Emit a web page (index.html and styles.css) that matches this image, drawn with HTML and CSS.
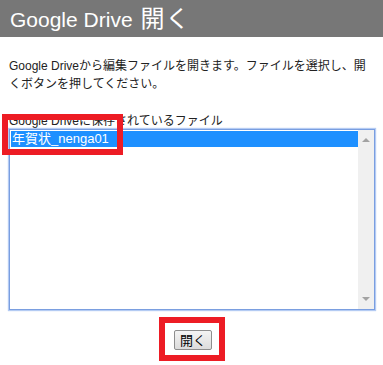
FILE: index.html
```html
<!DOCTYPE html>
<html lang="ja">
<head>
  <meta charset="UTF-8" />
  <meta name="viewport" content="width=device-width, initial-scale=1.0"/>
  <title>Google Drive 開く</title>
  <link rel="stylesheet" href="styles.css">
</head>
<body>
  <div class="header">Google Drive <span class="header-jp">開く</span></div>

  <div class="content">
    <p class="desc">Google Driveから編集ファイルを開きます。ファイルを選択し、開くボタンを押してください。</p>

    <div class="list-section">
      <div class="list-label">Google Driveに保存されているファイル</div>
      <div class="file-list">
        <div class="rows">
          <div class="row selected">年賀状_nenga01</div>
        </div>
        <div class="scrollbar">
          <span class="arrow up"></span>
          <span class="arrow down"></span>
        </div>
      </div>
      <div class="mark mark-file"></div>
    </div>

    <div class="actions">
      <div class="mark-button">
        <button class="open-btn">開く</button>
      </div>
    </div>
  </div>
</body>
</html>
```

FILE: styles.css
```css
body {
  margin: 0;
  padding: 0;
  background: #fff;
  color: #222;
  font-family: "Liberation Sans", "Noto Sans CJK JP", sans-serif;
}

.header {
  height: 37px;
  line-height: 37px;
  padding-left: 10px;
  background: #777;
  color: #fff;
  font-size: 21px;
  overflow: hidden;
}

.header-jp {
  font-size: 24px;
  margin-left: 2px;
  letter-spacing: 1px;
}

.content {
  padding: 0 8px 0 9px;
}

.desc {
  margin: 20px 0 0;
  font-size: 12px;
  line-height: 18px;
}

.list-section {
  position: relative;
  margin-top: 20px;
}

.list-label {
  font-size: 12px;
  line-height: 16px;
}

.file-list {
  display: flex;
  height: 181px;
  box-sizing: border-box;
  border: 1px solid #7a9ee0;
  box-shadow: 0 0 1px 1px #b4cbf3;
  background: #fff;
}

.rows {
  flex: 1;
  padding: 1px 0 0 1px;
}

.row {
  height: 16px;
  line-height: 16px;
  padding-left: 1px;
  font-size: 13px;
}

.row.selected {
  background: #1e90ff;
  color: #fff;
}

.scrollbar {
  width: 16px;
  background: #f0f0f0;
  display: flex;
  flex-direction: column;
  justify-content: space-between;
  align-items: center;
  padding: 8px 0;
}

.arrow {
  width: 0;
  height: 0;
  border-left: 4px solid transparent;
  border-right: 4px solid transparent;
}

.arrow.up {
  border-bottom: 4px solid #a3a3a3;
}

.arrow.down {
  border-top: 4px solid #a3a3a3;
}

.mark {
  position: absolute;
  box-sizing: border-box;
  border: 6px solid #ed1c24;
}

.mark-file {
  left: -7px;
  top: 1px;
  width: 121px;
  height: 41px;
}

.actions {
  display: flex;
  justify-content: center;
  margin-top: 7px;
}

.mark-button {
  display: flex;
  border: 6px solid #ed1c24;
  padding: 7px 7px 5px 9px;
}

.open-btn {
  width: 38px;
  height: 20px;
  padding: 0;
  font-family: "Noto Sans CJK JP", sans-serif;
  font-size: 13px;
  line-height: 18px;
  color: #000;
  background: linear-gradient(#f4f4f4, #dcdcdc);
  border: 1px solid #8e8e8e;
  border-radius: 2px;
}
```
